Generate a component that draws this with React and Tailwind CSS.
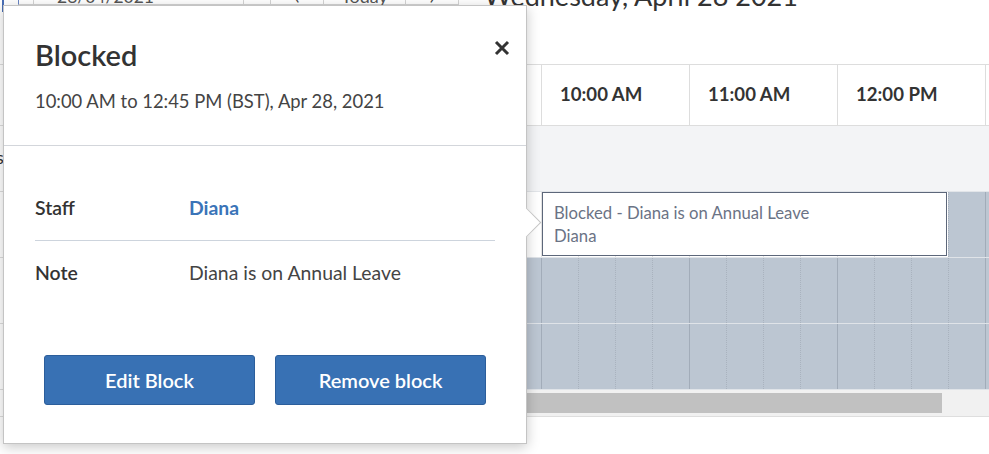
import React from 'react'

// Scheduler day view with a "Blocked" detail popover open over it
const hours = ['9:00 AM', '10:00 AM', '11:00 AM', '12:00 PM', '1:00 PM']
const SLOT = 'w-[37px] shrink-0'

function Slots({ blockedFrom = 0 }) {
  const cells = []
  for (let i = 0; i < hours.length * 4; i++) {
    const blocked = i >= blockedFrom
    const solid = i % 4 === 0
    cells.push(
      <div
        key={i}
        className={
          SLOT +
          ' h-full border-l ' +
          (solid ? 'border-solid ' : 'border-dotted ') +
          (blocked
            ? solid
              ? 'bg-[#bcc6d2] border-[#a2acb9]'
              : 'bg-[#bcc6d2] border-[#a9b2be]'
            : 'bg-white border-[#e3e3e3]')
        }
      />
    )
  }
  return cells
}

function Popover() {
  return (
    <div className="absolute left-[3px] top-[5px] w-[524px] h-[439px] bg-white border border-[#c4c4c4] shadow-[0_3px_12px_rgba(0,0,0,0.22)] z-10">
      {/* header */}
      <div className="flex justify-between pl-[31px] pr-[16px] pt-[32px] pb-[32px] border-b border-[#d3d6db]">
        <div>
          <h2 className="text-[29px] leading-[34px] font-semibold text-[#333]">Blocked</h2>
          <p className="mt-[17px] text-[18.4px] leading-[24px] text-[#444]">
            10:00 AM to 12:45 PM (BST), Apr 28, 2021
          </p>
        </div>
        <button className="mt-[2px] w-[16px] h-[16px] self-start text-[#333]" aria-label="Close">
          <svg viewBox="0 0 16 16" width="16" height="16">
            <path d="M2 2L14 14M14 2L2 14" stroke="currentColor" strokeWidth="3" strokeLinecap="butt" />
          </svg>
        </button>
      </div>

      {/* details */}
      <div className="px-[31px] pt-[30px] text-[19.4px]">
        <div className="flex items-center h-[65px] border-b border-[#cdd4dd]">
          <div className="w-[154px] font-semibold text-[#333]">Staff</div>
          <div className="font-bold text-[#3a74b8]">Diana</div>
        </div>
        <div className="flex items-center h-[64px]">
          <div className="w-[154px] font-semibold text-[#333]">Note</div>
          <div className="text-[#444]">Diana is on Annual Leave</div>
        </div>
      </div>

      {/* actions */}
      <div className="flex gap-[20px] px-[40px] mt-[50px]">
        <button className="flex-1 h-[50px] rounded-[3px] bg-[#3871b4] border border-[#2c5e9b] text-white text-[20px] font-semibold">
          Edit Block
        </button>
        <button className="flex-1 h-[50px] rounded-[3px] bg-[#3871b4] border border-[#2c5e9b] text-white text-[20px] font-semibold">
          Remove block
        </button>
      </div>

      {/* pointer */}
      <div className="absolute left-[512px] top-[206px] w-[21px] h-[21px] bg-white border-t border-r border-[#c4c4c4] rotate-45" />
    </div>
  )
}

export default function App() {
  return (
    <div className="relative w-[989px] h-[454px] overflow-hidden bg-white font-['Lato',sans-serif] text-[#333]">
      {/* toolbar, mostly scrolled off the top */}
      <div className="flex h-[40px] -mt-[35px] items-stretch">
        <div className="ml-[2px] w-[16px] h-[47px] border-l-2 border-b-2 border-[#4a6fb5]" />
        <div className="w-[15px] border-l border-l-[#6a86c6] border-b border-[#d4d4d4]" />
        <div className="w-[210px] flex items-end pl-[23px] border-l border-b border-[#d4d4d4] text-[17.5px] leading-none text-[#555]">
          <span className="mb-[-1px]">28/04/2021</span>
        </div>
        <div className="w-[27px] border-l border-b border-[#d4d4d4]" />
        <div className="w-[53px] flex items-end justify-center border-l border-b border-[#d4d4d4] text-[20px] leading-none text-[#444]">
          <span className="mb-[-2px]">‹</span>
        </div>
        <div className="w-[82px] flex items-end justify-center border-l border-b border-[#d4d4d4] text-[18px] leading-none text-[#555]">
          <span className="mb-[-1px]">Today</span>
        </div>
        <div className="w-[54px] flex items-end justify-center border-x border-b border-[#d4d4d4] text-[20px] leading-none text-[#444]">
          <span className="mb-[-2px]">›</span>
        </div>
        <div className="ml-[25px] self-end mb-[-4px] text-[27px] leading-none text-[#333]">
          Wednesday, April 28 2021
        </div>
      </div>

      <div className="h-[59px]" />

      <div className="flex">
        {/* resource column (under the popover) */}
        <div className="w-[526px] shrink-0">
          <div className="h-[62px] border-y border-[#dddddd]" />
          <div className="h-[66px] border-b border-[#dddddd] text-[18px] pt-[18px] -ml-[4px]">s</div>
          <div className="h-[66px] border-b border-[#dddddd]" />
          <div className="h-[66px] border-b border-[#dddddd]" />
          <div className="h-[66px] border-b border-[#dddddd]" />
          <div className="h-[27px] border-b border-[#dddddd]" />
        </div>

        {/* timeline */}
        <div className="flex-1 overflow-hidden">
          <div className="-ml-[133px] w-[740px]">
            <div className="flex h-[62px] border-y border-[#dddddd]">
              {hours.map((h) => (
                <div key={h} className="w-[148px] shrink-0 border-l border-[#dddddd] flex items-center pl-[18px] text-[18.6px] font-bold text-[#333]">
                  {h}
                </div>
              ))}
            </div>
            <div className="h-[66px] bg-[#f3f4f6] border-b border-[#e2e5e9]" />
            <div className="relative flex h-[66px] border-b border-[#dfe3e8]">
              <Slots blockedFrom={15} />
              <div className="absolute left-[149px] top-0 w-[405px] h-[64px] bg-white border border-[#5d677a] pl-[11px] pt-[9px] text-[16.7px] leading-[23px] text-[#6b7385]">
                <div>Blocked - Diana is on Annual Leave</div>
                <div>Diana</div>
              </div>
            </div>
            <div className="flex h-[66px] border-b border-[#dfe3e8]">
              <Slots />
            </div>
            <div className="flex h-[66px] border-b border-[#dfe3e8]">
              <Slots />
            </div>
          </div>
          <div className="h-[27px] bg-[#f1f1f1] border-b border-[#dedede] pt-[3px]">
            <div className="w-[416px] h-[20px] bg-[#c1c1c1]" />
          </div>
        </div>
      </div>

      <Popover />
    </div>
  )
}
